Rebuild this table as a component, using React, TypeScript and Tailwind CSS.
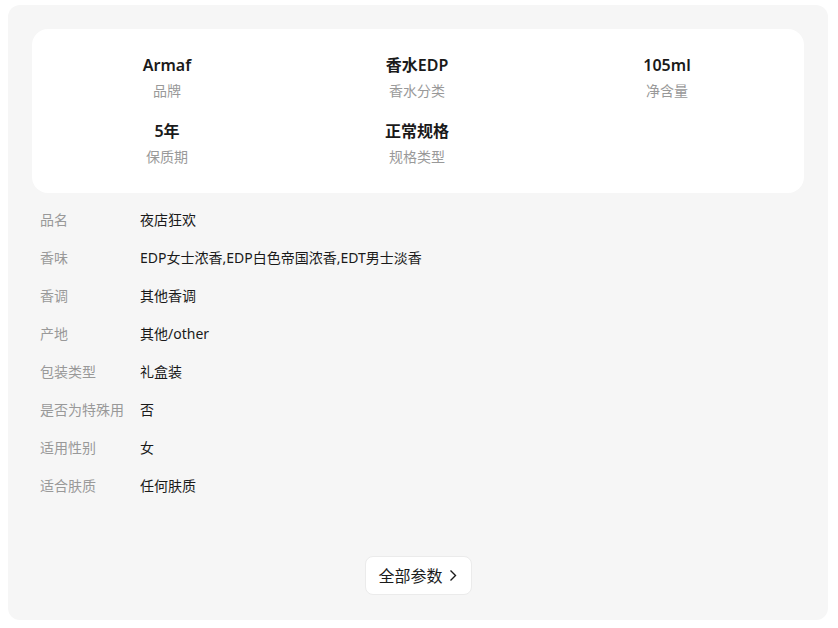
import React from "react";

const top = [
  [
    { v: "Armaf", l: "品牌" },
    { v: "香水EDP", l: "香水分类" },
    { v: "105ml", l: "净含量" },
  ],
  [
    { v: "5年", l: "保质期" },
    { v: "正常规格", l: "规格类型" },
  ],
];

const params = [
  ["品名", "夜店狂欢"],
  ["香味", "EDP女士浓香,EDP白色帝国浓香,EDT男士淡香"],
  ["香调", "其他香调"],
  ["产地", "其他/other"],
  ["包装类型", "礼盒装"],
  ["是否为特殊用", "否"],
  ["适用性别", "女"],
  ["适合肤质", "任何肤质"],
];

export default function App() {
  return (
    <div
      className="min-h-[628px] w-[838px] bg-white pl-[8px] pt-[5px]"
      style={{ fontFamily: '"Noto Sans", "Noto Sans CJK SC", sans-serif' }}
    >
      <div className="flex w-[820px] h-[615px] flex-col rounded-[12px] bg-[#f6f6f6] px-[24px] pt-[24px]">
        <div className="flex flex-col gap-[20px] rounded-[16px] bg-white pl-[10px] pr-[12px] pt-[25px] pb-[27px]">
          {top.map((row, i) => (
            <div key={i} className="grid grid-cols-3">
              {row.map((c) => (
                <div key={c.l} className="flex flex-col items-center gap-[6px]">
                  <div className="h-[22px] text-[16px] font-semibold leading-[22px] text-[#1a1a1a]">
                    {c.v}
                  </div>
                  <div className="h-[18px] text-[14px] leading-[18px] text-[#999999]">{c.l}</div>
                </div>
              ))}
            </div>
          ))}
        </div>
        <div className="mt-[7px] flex flex-col pl-[8px]">
          {params.map(([k, v]) => (
            <div key={k} className="flex h-[38px] items-center text-[14px]">
              <div className="w-[100px] text-[#999999]">{k}</div>
              <div className="text-[#1a1a1a]">{v}</div>
            </div>
          ))}
        </div>
        <div className="mt-[52px] flex justify-center">
          <button className="flex h-[39px] w-[107px] items-center gap-[6px] rounded-[8px] border border-[#ebebeb] bg-white pl-[13px] text-[16px] text-[#1a1a1a]">
            <span>全部参数</span>
            <svg width="8" height="13" viewBox="0 0 8 13" fill="none">
              <path d="M1.5 1.5 L6.5 6.5 L1.5 11.5" stroke="#1a1a1a" strokeWidth="1.4" />
            </svg>
          </button>
        </div>
      </div>
    </div>
  );
}
